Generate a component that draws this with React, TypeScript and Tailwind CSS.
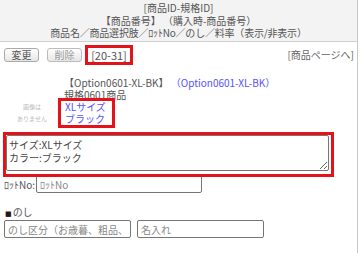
import React from "react";

export default function App() {
  return (
    <div className="w-[362px] h-[253px] bg-white overflow-hidden">
      <div className="w-[358px] h-[253px] border-r border-[#c8c8c8] font-['Noto_Sans_CJK_JP',sans-serif] text-[10px] text-[#555]">
        <div className="h-[42px] bg-[#f3f3f3] border-b border-[#cfcfcf] pt-[2px] text-center leading-[12.5px]">
          <div>[商品ID-規格ID]</div>
          <div>【商品番号】 （購入時-商品番号）</div>
          <div className="tracking-[-0.2px]">商品名／商品選択肢／ﾛｯﾄNo／のし／料率（表示/非表示）</div>
        </div>

        <div className="mt-[6px] flex items-center pl-[4px] pr-[3px]">
          <button className="w-[35px] h-[14px] rounded-[3px] border border-[#aaa] bg-linear-to-b from-white to-[#e6e6e6] text-[10px] leading-none text-[#555]">
            変更
          </button>
          <button className="ml-[8px] w-[35px] h-[14px] rounded-[3px] border border-[#bbb] bg-linear-to-b from-white to-[#e6e6e6] text-[10px] leading-none text-[#999]">
            削除
          </button>
          <div className="ml-[6px] w-[42px] h-[14px] flex items-center justify-center outline-3 outline-[#e5121a] text-[11px] leading-none text-[#555]">
            [20-31]
          </div>
          <div className="ml-auto text-[#666] leading-none">[商品ページへ]</div>
        </div>

        <div className="mt-[15px] flex leading-[12px]">
          <div className="w-[64px] pt-[24px] text-center text-[6px] leading-[12px] text-[#bbb]">
            <div>画像は</div>
            <div>ありません</div>
          </div>
          <div>
            <div>
              【Option0601-XL-BK】 <span className="text-[#5353ff]">（Option0601-XL-BK）</span>
            </div>
            <div>規格0601商品</div>
            <div className="-ml-[3px] pl-[4px] w-[51px] outline-3 outline-[#e5121a] text-[#5353ff]">
              <div>XLサイズ</div>
              <div>ブラック</div>
            </div>
          </div>
        </div>

        <div className="mt-[10px] ml-[6px] w-[325px] h-[39px] outline-3 outline-[#e5121a]">
          <textarea
            className="block mt-[3px] w-[323px] h-[36px] border border-[#767676] rounded-[2px] p-[2px] text-[10px] leading-[13px] text-[#444] resize-y"
            defaultValue={"サイズ:XLサイズ\nカラー:ブラック"}
          />
        </div>

        <div className="mt-[1px] flex items-center pl-[4px]">
          <span className="w-[32px]">ﾛｯﾄNo:</span>
          <input
            className="w-[166px] h-[18px] border border-[#767676] rounded-[2px] px-[3px] text-[10px] placeholder:text-[#888]"
            placeholder="ﾛｯﾄNo"
          />
        </div>

        <div className="mt-[13px] pl-[5px] leading-[12px]">
          <span className="font-['DejaVu_Sans'] text-[7px] text-[#2b1414] mr-[1px]">■</span>のし
        </div>
        <div className="flex gap-[6px] pl-[4px]">
          <input
            className="w-[127px] h-[18px] border border-[#767676] rounded-[2px] px-[3px] text-[10px] placeholder:text-[#888]"
            placeholder="のし区分（お歳暮、粗品、内祝い等）"
          />
          <input
            className="w-[127px] h-[18px] border border-[#767676] rounded-[2px] px-[3px] text-[10px] placeholder:text-[#888]"
            placeholder="名入れ"
          />
        </div>
      </div>
    </div>
  );
}
